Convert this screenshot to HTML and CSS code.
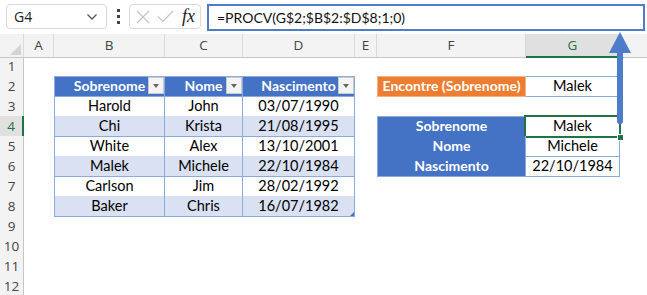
FILE: index.html
```html
<!DOCTYPE html>
<html lang="pt">
<head>
    <meta charset="UTF-8">
    <title>PROCV - Sobrenome</title>
    <link rel="stylesheet" href="styles.css">
</head>
<body>
<div class="app">
    <!-- Name box + formula bar -->
    <div class="toolbar">
        <div class="namebox">
            <span>G4</span>
            <svg width="12" height="8" viewBox="0 0 12 8"><path d="M1.5 1.5 L6 6 L10.5 1.5" fill="none" stroke="#555" stroke-width="1.3"/></svg>
        </div>
        <div class="dots"><i></i><i></i><i></i></div>
        <div class="fxbox">
            <svg width="14" height="14" viewBox="0 0 14 14"><path d="M1 1 L13 13 M13 1 L1 13" stroke="#c4c4c4" stroke-width="1.2"/></svg>
            <svg width="17" height="13" viewBox="0 0 17 13"><path d="M1 6.5 L6 11.5 L16 1" fill="none" stroke="#c4c4c4" stroke-width="1.2"/></svg>
            <span class="fx">fx</span>
        </div>
        <div class="formula">=PROCV(G$2;$B$2:$D$8;1;0)</div>
    </div>

    <!-- Grid -->
    <div class="sheet">
        <div class="row heads">
            <div class="corner"></div>
            <div class="ch">A</div>
            <div class="ch">B</div>
            <div class="ch">C</div>
            <div class="ch">D</div>
            <div class="ch">E</div>
            <div class="ch">F</div>
            <div class="ch sel">G</div>
            <div class="ch end"></div>
        </div>
        <div class="row"><div class="rh">1</div></div>
        <div class="row">
            <div class="rh">2</div>
            <div class="c cB th top first">Sobrenome<span class="dd"></span></div>
            <div class="c cC th top">Nome<span class="dd"></span></div>
            <div class="c cD th top">Nascimento<span class="dd"></span></div>
            <div class="c cF orange">Encontre (Sobrenome)</div>
            <div class="c cG top">Malek</div>
        </div>
        <div class="row">
            <div class="rh">3</div>
            <div class="c cB first">Harold</div>
            <div class="c cC">John</div>
            <div class="c cD">03/07/1990</div>
        </div>
        <div class="row band">
            <div class="rh cur">4</div>
            <div class="c cB first">Chi</div>
            <div class="c cC">Krista</div>
            <div class="c cD">21/08/1995</div>
            <div class="c cF blue top">Sobrenome</div>
            <div class="c cG top active">Malek<span class="handle"></span></div>
        </div>
        <div class="row">
            <div class="rh">5</div>
            <div class="c cB first">White</div>
            <div class="c cC">Alex</div>
            <div class="c cD">13/10/2001</div>
            <div class="c cF blue">Nome</div>
            <div class="c cG">Michele</div>
        </div>
        <div class="row band">
            <div class="rh">6</div>
            <div class="c cB first">Malek</div>
            <div class="c cC">Michele</div>
            <div class="c cD">22/10/1984</div>
            <div class="c cF blue">Nascimento</div>
            <div class="c cG">22/10/1984</div>
        </div>
        <div class="row">
            <div class="rh">7</div>
            <div class="c cB first">Carlson</div>
            <div class="c cC">Jim</div>
            <div class="c cD">28/02/1992</div>
        </div>
        <div class="row band">
            <div class="rh">8</div>
            <div class="c cB first">Baker</div>
            <div class="c cC">Chris</div>
            <div class="c cD corner-mark">16/07/1982</div>
        </div>
        <div class="row"><div class="rh">9</div></div>
        <div class="row"><div class="rh">10</div></div>
        <div class="row"><div class="rh">11</div></div>
        <div class="row"><div class="rh">12</div></div>
    </div>

    <!-- Annotation arrow from G4 up to the formula bar -->
    <svg class="arrow" width="28" height="96" viewBox="0 0 28 96">
        <polygon points="14,0 25,21 3,21" fill="#4d7cc9"/>
        <path d="M11 20 L17 20 L17 90 Q14 95 11 90 Z" fill="#4d7cc9"/>
    </svg>
</div>
</body>
</html>
```

FILE: styles.css
```css
body {
    margin: 0;
    background-color: #fff;
    font-family: "Lato", "Liberation Sans", sans-serif;
}

.app {
    position: relative;
    width: 647px;
    height: 295px;
    overflow: hidden;
}

/* ---------- toolbar ---------- */

.toolbar {
    height: 34px;
    display: flex;
    align-items: flex-start;
    padding: 4px 2px 0 6px;
    box-sizing: border-box;
    font-family: "Open Sans", "Noto Sans", sans-serif;
}

.namebox {
    width: 101px;
    height: 25px;
    box-sizing: border-box;
    border: 1px solid #d9d9d9;
    border-radius: 4px;
    display: flex;
    align-items: center;
    justify-content: space-between;
    padding: 0 8px 0 7px;
    font-size: 14px;
    color: #222;
}

.dots {
    width: 22px;
    height: 25px;
    display: flex;
    flex-direction: column;
    align-items: center;
    justify-content: center;
    gap: 3px;
}

.dots i {
    width: 3px;
    height: 3px;
    background-color: #444;
}

.fxbox {
    width: 72px;
    height: 25px;
    box-sizing: border-box;
    border: 1px solid #d9d9d9;
    border-radius: 4px;
    display: flex;
    align-items: center;
    gap: 7px;
    padding: 0 5px 0 6px;
}

.fx {
    font-family: "Liberation Serif", serif;
    font-style: italic;
    font-size: 18px;
    color: #222;
    margin-left: 1px;
}

.formula {
    flex: 1;
    height: 27px;
    margin-left: 6px;
    box-sizing: border-box;
    border: 2px solid #4d7cc9;
    padding-left: 8px;
    font-family: "Lato", sans-serif;
    font-size: 14px;
    line-height: 23px;
    color: #111;
}

/* ---------- sheet ---------- */

.row {
    display: grid;
    grid-template-columns: 24px 30px 111px 78px 112px 22px 149px 94px 1fr;
    height: 20px;
}

.heads {
    height: 22px;
    font-family: "Open Sans", "Noto Sans", sans-serif;
}

.corner,
.ch {
    background-color: #f3f3f3;
    border-right: 1px solid #dadada;
    border-bottom: 1px solid #c6c6c6;
    box-sizing: border-box;
}

.corner {
    position: relative;
}

.corner::after {
    content: "";
    position: absolute;
    right: 2px;
    bottom: 2px;
    border-left: 11px solid transparent;
    border-bottom: 11px solid #d4d4d4;
}

.ch {
    text-align: center;
    font-size: 13.5px;
    line-height: 22px;
    color: #444;
}

.ch.sel {
    background-color: #e0e0e0;
    border-bottom: 2px solid #217346;
    color: #217346;
}

.ch.end {
    border-right: none;
}

.rh {
    grid-column: 1;
    background-color: #f3f3f3;
    border-right: 1px solid #c6c6c6;
    border-bottom: 1px solid #dedede;
    box-sizing: border-box;
    text-align: center;
    font-family: "Open Sans", "Noto Sans", sans-serif;
    font-size: 13.5px;
    line-height: 20px;
    color: #444;
}

.rh.cur {
    background-color: #e0e0e0;
    border-right: 2px solid #217346;
    color: #217346;
}

.c {
    position: relative;
    box-sizing: border-box;
    border-right: 1px solid #8ea9db;
    border-bottom: 1px solid #8ea9db;
    text-align: center;
    font-size: 14.5px;
    line-height: 20px;
    color: #000;
    white-space: nowrap;
}

.cB { grid-column: 3; }
.cC { grid-column: 4; }
.cD { grid-column: 5; }
.cF { grid-column: 7; }
.cG { grid-column: 8; }

.first { border-left: 1px solid #8ea9db; }
.top { border-top: 1px solid #8ea9db; line-height: 18px; }

.band .cB,
.band .cC,
.band .cD {
    background-color: #d9e1f2;
}

.th {
    background-color: #4472c4;
    color: #fff;
    font-weight: bold;
    font-size: 14px;
}

.dd {
    position: absolute;
    right: 0;
    top: 0;
    width: 16px;
    height: 17px;
    box-sizing: border-box;
    background-color: #f4f4f4;
    border: 1px solid #c9c9c9;
}

.dd::after {
    content: "";
    position: absolute;
    left: 4px;
    top: 6px;
    border-left: 3.5px solid transparent;
    border-right: 3.5px solid transparent;
    border-top: 4px solid #666;
}

.orange {
    background-color: #ed7d31;
    color: #fff;
    font-weight: bold;
    font-size: 14px;
    border-top: 1px solid #f4b084;
    border-left: 1px solid #f4b084;
    border-right-color: #f4b084;
    border-bottom-color: #f4b084;
    line-height: 18px;
}

.blue {
    background-color: #4472c4;
    color: #fff;
    font-weight: bold;
    font-size: 14px;
    border-left: 1px solid #8ea9db;
}

.active::after {
    content: "";
    position: absolute;
    left: -2px;
    top: -2px;
    right: -2px;
    bottom: -2px;
    border: 2px solid #217346;
}

.handle {
    position: absolute;
    right: -5px;
    bottom: -5px;
    width: 5px;
    height: 5px;
    background-color: #217346;
    border: 1px solid #fff;
    z-index: 2;
}

.corner-mark::after {
    content: "";
    position: absolute;
    right: 0;
    bottom: 0;
    border-left: 4px solid transparent;
    border-bottom: 4px solid #4472c4;
}

.arrow {
    position: absolute;
    left: 606px;
    top: 32px;
}
```
